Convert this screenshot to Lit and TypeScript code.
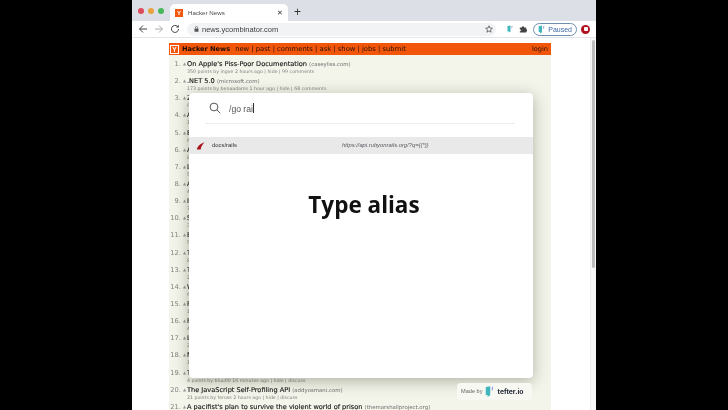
import { LitElement, html, css } from "lit";
import { customElement } from "lit/decorators.js";

const stories: [string, string, string, string][] = [
  ["On Apple's Piss-Poor Documentation", "caseyliss.com", "350 points by ingve 2 hours ago", "99 comments"],
  [".NET 5.0", "microsoft.com", "173 points by benaadams 1 hour ago", "68 comments"],
  ["Zig's new relationship with LLVM", "kristoff.it", "90 points by mpweiher 3 hours ago", "21 comments"],
  ["Apple Silicon M1 benchmarks", "anandtech.com", "120 points by nikit 4 hours ago", "40 comments"],
  ["Building a tiny compiler", "github.com", "64 points by luu 5 hours ago", "12 comments"],
  ["Ask HN: Books you read this year", "", "88 points by throwaway 3 hours ago", "77 comments"],
  ["Launch HN: Startup (YC W20)", "", "51 points by founder 2 hours ago", "30 comments"],
  ["An introduction to Datalog", "example.org", "42 points by tosh 6 hours ago", "9 comments"],
  ["Inside the Linux scheduler", "lwn.net", "77 points by zdw 4 hours ago", "15 comments"],
  ["Show HN: A text editor", "github.com", "34 points by soheil 1 hour ago", "8 comments"],
  ["Erlang in production", "example.com", "56 points by lawik 5 hours ago", "11 comments"],
  ["The history of Unix", "bell-labs.com", "81 points by ingve 7 hours ago", "19 comments"],
  ["Type systems explained", "example.net", "29 points by pron 3 hours ago", "6 comments"],
  ["Why SQLite works", "sqlite.org", "66 points by tosh 2 hours ago", "24 comments"],
  ["Retro computing notes", "example.io", "18 points by rbanffy 1 hour ago", "3 comments"],
  ["Rust for web services", "example.dev", "47 points by fanf2 2 hours ago", "13 comments"],
  ["Learning category theory", "example.edu", "23 points by vt 4 hours ago", "5 comments"],
  ["Maps of the old world", "example.com", "15 points by samizdis 2 hours ago", "2 comments"],
  ["Tiny web servers", "example.com", "4 points by bluu00 16 minutes ago", "discuss"],
  ["The JavaScript Self-Profiling API", "addyosmani.com", "21 points by feross 2 hours ago", "discuss"],
  ["A pacifist's plan to survive the violent world of prison", "themarshallproject.org", "12 points by pseudolus 1 hour ago", "discuss"],
];

const teftLogo = (w: number, h: number) => html`<svg width=${w} height=${h} viewBox="0 0 12 16">
  <path d="M1 2 L7 1 L7 13 L3.5 15 L3.5 12.5 L1 13 Z" fill="#3fb7bd"></path>
  <path d="M9 3 L11 1 L10.3 6 L9 7 Z" fill="#9a8fe0"></path>
</svg>`;

@customElement("app-root")
export class AppRoot extends LitElement {
  static styles = css`
    :host { display: block; width: 728px; height: 410px; overflow: hidden; background: #000; font-family: "DejaVu Sans", sans-serif; }
    .stage { display: flex; justify-content: center; height: 410px; }
    .browser { width: 464px; height: 410px; display: flex; flex-direction: column; background: #fff; overflow: hidden; filter: blur(0.3px); }
    .tabs { height: 21px; flex: none; background: #dcdfe5; display: flex; align-items: flex-end; }
    .lights { display: flex; gap: 4px; width: 38px; padding-left: 6px; box-sizing: border-box; align-self: center; align-items: center; }
    .lights i { width: 6px; height: 6px; border-radius: 50%; display: block; }
    .tab { width: 118px; height: 17px; background: #fff; border-radius: 5px 5px 0 0; display: flex; align-items: center; padding: 0 5px; box-sizing: border-box; font: 6.2px "Liberation Sans", sans-serif; color: #4a4a4a; gap: 5px; }
    .fav { width: 8px; height: 8px; background: #f15a0e; color: #fff; font: bold 6px "Liberation Sans", sans-serif; display: flex; align-items: center; justify-content: center; }
    .tab .ttl { flex: 1; }
    .tab .x { font-size: 6.5px; color: #333; }
    .plus { font: 12px "Liberation Sans", sans-serif; color: #333; margin: 0 0 2px 6px; }
    .toolbar { height: 17px; flex: none; display: flex; align-items: center; background: #fff; padding: 0 6px; box-sizing: border-box; gap: 6px; border-bottom: 1px solid #e4e5e8; }
    .nav { width: 10px; height: 10px; flex: none; }
    .omni { flex: 1; height: 13px; margin: 0 5px 0 1px; background: #f1f3f4; border-radius: 7px; display: flex; align-items: center; padding: 0 3px 0 7px; gap: 3px; font: 7.5px "Liberation Sans", sans-serif; color: #3b3d40; }
    .omni span { flex: 1; }
    .paused { width: 44px; height: 13px; margin-right: -2px; box-sizing: border-box; border: 1px solid #6f8fb0; border-radius: 7px; display: flex; align-items: center; justify-content: space-between; padding: 0 4px; font: 7px "Liberation Sans", sans-serif; color: #3f6aa8; flex: none; }
    .redbtn { width: 9px; height: 9px; background: #b3121d; border-radius: 50%; flex: none; display: flex; align-items: center; justify-content: center; }
    .redbtn i { width: 4px; height: 4px; background: #fff; border-radius: 1px; display: block; }
    .page { flex: 1; position: relative; display: flex; overflow: hidden; background: #fff; padding: 5px 0 0 37px; }
    .hn { width: 382px; background: #f3f4ea; flex: none; height: 400px; }
    .hnhead { height: 12px; background: #f2560a; display: flex; align-items: center; font: 6.8px "DejaVu Sans", sans-serif; color: #2a1206; padding: 0 3px 0 1px; }
    .logo { width: 9px; height: 9px; box-sizing: border-box; border: 1px solid #fff; color: #fff; font: bold 6.5px "Liberation Sans", sans-serif; display: flex; align-items: center; justify-content: center; margin-right: 3px; }
    .hnhead b { font-size: 6.6px; font-weight: 700; margin-right: 5px; color: #1d0d04; }
    .hnhead .sp { flex: 1; }
    .hnhead .login { font-size: 6.6px; }
    .list { padding-top: 4px; }
    .row { height: 17.15px; display: grid; grid-template-columns: 13px 5px 1fr; grid-template-rows: 10px 7.15px; color: #828282; }
    .num { font: 6.7px "DejaVu Sans", sans-serif; text-align: right; line-height: 10px; white-space: nowrap; padding-right: 1px; }
    .up { font: 4px "DejaVu Sans", sans-serif; line-height: 10px; text-align: center; color: #9a9a9a; }
    .title { font: 6.6px "DejaVu Sans", sans-serif; line-height: 10px; color: #111; white-space: nowrap; overflow: hidden; -webkit-text-stroke: 0.12px #111; }
    .title small { font-size: 5.4px; color: #707070; -webkit-text-stroke: 0; }
    .sub { grid-column: 3; font: 4.7px "DejaVu Sans", sans-serif; line-height: 6px; color: #808080; white-space: nowrap; }
    .scroll { width: 6px; position: absolute; right: 0; top: 0; bottom: 0; background: #f8f8f8; border-left: 1px solid #eee; box-sizing: border-box; }
    .scroll i { display: block; height: 228px; margin: 2px 1px 0 1px; background: #bcbcbc; border-radius: 2px; }
    .modal { position: absolute; left: 57px; top: 55px; width: 344px; height: 285px; background: #fff; border-radius: 4px; box-shadow: 0 3px 15px rgba(60,60,40,.36); display: flex; flex-direction: column; }
    .search { margin: 0 18px 0 16px; height: 30px; border-bottom: 1px solid #ededed; display: flex; align-items: center; gap: 8px; font: 8.6px "Liberation Sans", sans-serif; color: #555; padding-left: 4px; }
    .search .cursor { border-left: 1px solid #333; height: 10px; display: inline-block; vertical-align: -1px; }
    .hit { margin-top: 13px; height: 16.5px; background: #e9e9e9; display: flex; align-items: center; font: 5.9px "Liberation Sans", sans-serif; color: #2f2f2f; padding-left: 7px; }
    .hit .rails { width: 9px; height: 9px; margin-right: 7px; flex: none; }
    .hit .n { width: 130px; }
    .hit .u { font-style: italic; font-size: 5.8px; color: #56595e; }
    .big { flex: 1; display: flex; justify-content: center; padding: 36px 0 0 6px; font: 700 22.5px "Open Sans", sans-serif; color: #111; line-height: 30px; }
    .badge { position: absolute; left: 325px; top: 344.5px; width: 75px; height: 17px; border-radius: 4px; background: #f8f8f3; display: flex; align-items: center; gap: 3px; padding-left: 4px; box-sizing: border-box; font: 5.6px "Liberation Sans", sans-serif; color: #666; }
    .badge b { font: 700 6.8px "Inter", sans-serif; color: #1d2530; }
  `;

  render() {
    const lights = ["#dd4a5e", "#e8a33c", "#46b85a"];
    const links = "new | past | comments | ask | show | jobs | submit";
    return html`<div class="stage"><div class="browser">
      <div class="tabs">
        <div class="lights">${lights.map((c) => html`<i style="background:${c}"></i>`)}</div>
        <div class="tab"><span class="fav">Y</span><span class="ttl">Hacker News</span><span class="x">✕</span></div>
        <span class="plus">+</span>
      </div>
      <div class="toolbar">
        <svg class="nav" viewBox="0 0 10 10"><path d="M9 5H1.5M5 1.5 1.5 5 5 8.5" fill="none" stroke="#444" stroke-width="1"></path></svg>
        <svg class="nav" viewBox="0 0 10 10"><path d="M1 5H8.5M5 1.5 8.5 5 5 8.5" fill="none" stroke="#aaa" stroke-width="1"></path></svg>
        <svg class="nav" viewBox="0 0 10 10"><path d="M8.5 5A3.5 3.5 0 1 1 7.4 2.4" fill="none" stroke="#444" stroke-width="1"></path><path d="M8.8 .8V3.6H6Z" fill="#444"></path></svg>
        <div class="omni">
          <svg width="5" height="6" viewBox="0 0 5 6"><rect x=".5" y="2.5" width="4" height="3.2" rx=".5" fill="#555"></rect><path d="M1.4 2.6V1.6a1.1 1.1 0 0 1 2.2 0V2.6" fill="none" stroke="#555" stroke-width=".7"></path></svg>
          <span>news.ycombinator.com</span>
          <svg width="8" height="8" viewBox="0 0 10 10"><path d="M5 1 6.2 3.8 9.2 4 6.9 6 7.6 9 5 7.4 2.4 9 3.1 6 .8 4 3.8 3.8Z" fill="none" stroke="#444" stroke-width=".9"></path></svg>
        </div>
        ${teftLogo(6, 8)}
        <svg width="8" height="8" viewBox="0 0 10 10"><path d="M1 3H3.6A1.4 1.4 0 0 1 6.4 3H9V5.4A1.4 1.4 0 0 1 9 8.2V9.5H1V8A1.4 1.4 0 0 0 1 5.2Z" fill="#444"></path></svg>
        <div class="paused">${teftLogo(7, 9)}<span>Paused</span></div>
        <div class="redbtn"><i></i></div>
      </div>
      <div class="page">
        <div class="hn">
          <div class="hnhead"><span class="logo">Y</span><b>Hacker News</b><span>${links}</span><span class="sp"></span><span class="login">login</span></div>
          <div class="list">
            ${stories.map((s, i) => html`<div class="row">
              <span class="num">${i + 1}.</span><span class="up">▲</span>
              <span class="title">${s[0]}${s[1] ? html` <small>(${s[1]})</small>` : ""}</span>
              <span class="sub">${s[2]} | hide | ${s[3]}</span>
            </div>`)}
          </div>
        </div>
        <div class="scroll"><i></i></div>
        <div class="modal">
          <div class="search">
            <svg width="12" height="12" viewBox="0 0 12 12"><circle cx="5" cy="5" r="3.9" fill="none" stroke="#444" stroke-width=".9"></circle><path d="M8 8 11.2 11.2" stroke="#444" stroke-width=".9"></path></svg>
            <span>/go rai<span class="cursor"></span></span>
          </div>
          <div class="hit">
            <svg class="rails" viewBox="0 0 10 10"><path d="M1 9.5C1.5 6.5 4 3.5 9.5 1.5 7 4 5.5 6.5 5.2 9.5Z" fill="#a8111c"></path></svg>
            <span class="n">docs/rails</span><span class="u">https://api.rubyonrails.org/?q={{*}}</span>
          </div>
          <div class="big">Type alias</div>
        </div>
        <div class="badge"><span>Made by</span>${teftLogo(9, 13)}<b>tefter.io</b></div>
      </div>
    </div></div>`;
  }
}
